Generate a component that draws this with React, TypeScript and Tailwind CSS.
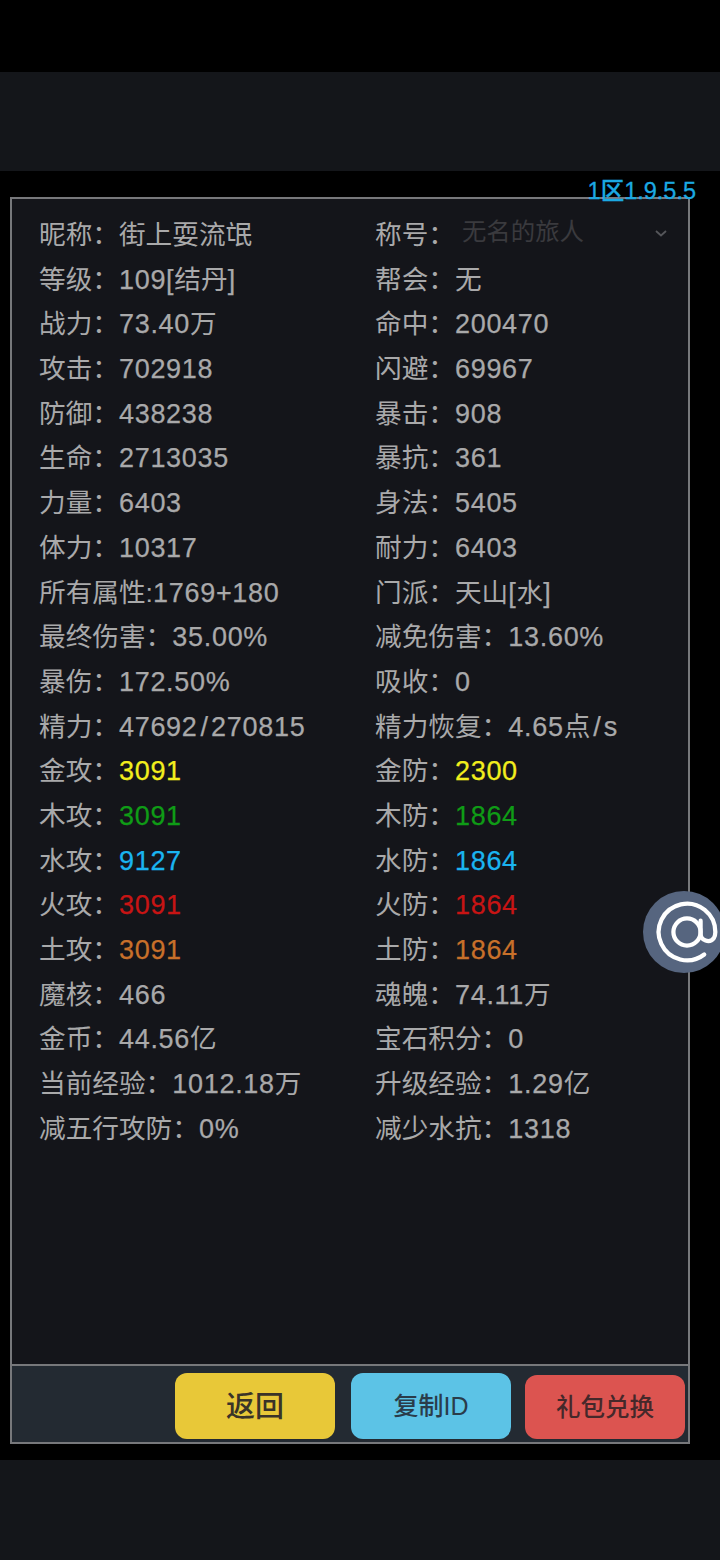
const FONT = "font-['Liberation_Sans','Noto_Sans_CJK_SC',sans-serif]"

type Stat = { label: string; value: string; color?: string }

const rows: [Stat, Stat | null][] = [
  [{ label: "昵称：", value: "街上耍流氓" }, null],
  [{ label: "等级：", value: "109[结丹]" }, { label: "帮会：", value: "无" }],
  [{ label: "战力：", value: "73.40万" }, { label: "命中：", value: "200470" }],
  [{ label: "攻击：", value: "702918" }, { label: "闪避：", value: "69967" }],
  [{ label: "防御：", value: "438238" }, { label: "暴击：", value: "908" }],
  [{ label: "生命：", value: "2713035" }, { label: "暴抗：", value: "361" }],
  [{ label: "力量：", value: "6403" }, { label: "身法：", value: "5405" }],
  [{ label: "体力：", value: "10317" }, { label: "耐力：", value: "6403" }],
  [{ label: "所有属性:", value: "1769+180" }, { label: "门派：", value: "天山[水]" }],
  [{ label: "最终伤害：", value: "35.00%" }, { label: "减免伤害：", value: "13.60%" }],
  [{ label: "暴伤：", value: "172.50%" }, { label: "吸收：", value: "0" }],
  [{ label: "精力：", value: "47692/270815" }, { label: "精力恢复：", value: "4.65点/s" }],
  [{ label: "金攻：", value: "3091", color: "text-[#f2ee1d]" }, { label: "金防：", value: "2300", color: "text-[#f2ee1d]" }],
  [{ label: "木攻：", value: "3091", color: "text-[#0f9c16]" }, { label: "木防：", value: "1864", color: "text-[#0f9c16]" }],
  [{ label: "水攻：", value: "9127", color: "text-[#1ab4f0]" }, { label: "水防：", value: "1864", color: "text-[#1ab4f0]" }],
  [{ label: "火攻：", value: "3091", color: "text-[#c81414]" }, { label: "火防：", value: "1864", color: "text-[#c81414]" }],
  [{ label: "土攻：", value: "3091", color: "text-[#c8702a]" }, { label: "土防：", value: "1864", color: "text-[#c8702a]" }],
  [{ label: "魔核：", value: "466" }, { label: "魂魄：", value: "74.11万" }],
  [{ label: "金币：", value: "44.56亿" }, { label: "宝石积分：", value: "0" }],
  [{ label: "当前经验：", value: "1012.18万" }, { label: "升级经验：", value: "1.29亿" }],
  [{ label: "减五行攻防：", value: "0%" }, { label: "减少水抗：", value: "1318" }],
]

// digits are larger and a bit heavier, chinese text stays at the label size
function StatValue({ value, color }: { value: string; color?: string }) {
  const parts = value.split(/([\u4e00-\u9fff]+|\/)/)
  return (
    <span className={`text-[27px] tracking-[0.7px] [-webkit-text-stroke:0.25px] ${color ?? ""}`}>
      {parts.map((part, i) =>
        i % 2 === 1 ? (
          <span
            key={i}
            className={part === "/" ? "mx-[3px] tracking-normal" : "text-[26.67px] tracking-normal [-webkit-text-stroke:0px]"}
          >
            {part}
          </span>
        ) : (
          part
        ),
      )}
    </span>
  )
}

function StatCell({ stat }: { stat: Stat }) {
  return (
    <div className="whitespace-nowrap">
      {stat.label}
      <StatValue value={stat.value} color={stat.color} />
    </div>
  )
}

function TitleSelect() {
  return (
    <div className="flex items-center whitespace-nowrap">
      称号：
      <div className="-mt-1.5 flex w-[213px] items-center justify-between pl-[7px] text-[24.4px] text-[#3a3a3e]">
        无名的旅人
        <svg width="14" height="10" viewBox="0 0 14 10" fill="none" stroke="#55565a" strokeWidth="1.8" className="mt-0.5">
          <path d="M2 3l5 4.5L12 3" />
        </svg>
      </div>
    </div>
  )
}

export default function App() {
  return (
    <div className={`relative flex h-[1560px] w-[720px] flex-col overflow-hidden bg-black ${FONT}`}>
      <div className="mt-[72px] h-[99px] bg-[#14161a]" />

      <div className="flex flex-1 flex-col pt-[26px] pr-[30px] pb-4 pl-2.5">
        <div className="relative flex flex-1 flex-col border-2 border-[#77787b] bg-[#14151a]">
          <div className="absolute -top-[23px] right-[-8px] text-[23.5px] leading-[30px] font-medium text-[#1ba9e2] [-webkit-text-stroke:0.3px]">
            1区1.9.5.5
          </div>

          <div className="flex-1 pt-[14px] pl-[27px] text-[26.67px] leading-[44.7px] text-[#a9a9aa]">
            {rows.map(([left, right]) => (
              <div key={left.label} className="grid h-[44.7px] grid-cols-[336px_1fr]">
                <StatCell stat={left} />
                {right ? <StatCell stat={right} /> : <TitleSelect />}
              </div>
            ))}
          </div>

          <div className="flex h-[78px] items-start justify-end gap-4 border-t-2 border-[#77787b] bg-[#232a32] pt-[7px] pr-[3px]">
            <button className="h-[66px] w-40 rounded-xl bg-[#e8c838] pt-1 text-[29px] font-medium text-[#3a3328]">返回</button>
            <button className="-mr-0.5 h-[66px] w-40 rounded-xl bg-[#5cc3e6] pt-0.5 text-[25px] font-medium text-[#2a3c4a]">复制ID</button>
            <button className="mt-0.5 h-16 w-40 rounded-xl bg-[#dc5450] pt-0.5 text-[24.5px] font-medium text-[#45282a]">礼包兑换</button>
          </div>
        </div>
      </div>

      <div className="h-[100px] bg-[#14161a]" />

      <div className="absolute top-[891px] left-[643px] flex h-[82px] w-[82px] items-center justify-center rounded-full bg-[#56657f] pl-1.5">
        <svg width="68" height="68" viewBox="0 0 24 24" fill="none" stroke="white" strokeWidth="1.5" strokeLinecap="round" strokeLinejoin="round">
          <circle cx="12" cy="12" r="4.8" />
          <path d="M16.8 8v4.5a2.6 2.6 0 0 0 4.7 1.6c.4-.7.5-1.4.5-2.1a10 10 0 1 0-3.92 7.94" />
        </svg>
      </div>
    </div>
  )
}
